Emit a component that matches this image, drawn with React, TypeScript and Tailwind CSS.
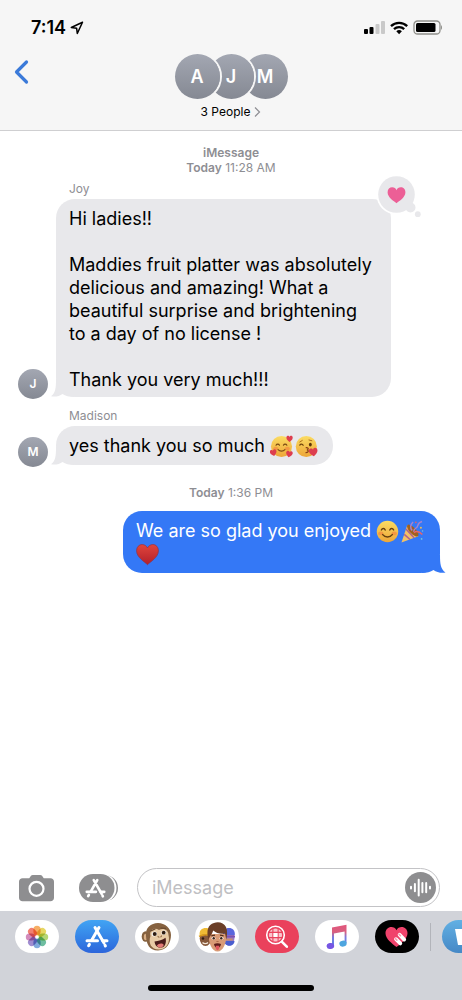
import type { ReactNode } from 'react'

const font = "font-['Inter','Liberation_Sans',sans-serif]"

function StatusIcons() {
  return (
    <svg width="78" height="16" viewBox="0 0 78 16" role="img" aria-label="Signal, Wi-Fi and battery">
      <rect x="0" y="9" width="4" height="5" rx="1" fill="#000" />
      <rect x="5.5" y="7" width="4" height="7" rx="1" fill="#000" />
      <rect x="11.5" y="4" width="4" height="10" rx="1" fill="#c9c9c9" />
      <rect x="17" y="1" width="4" height="13" rx="1" fill="#c9c9c9" />
      <g fill="none" stroke="#000" strokeWidth="2.3">
        <path d="M27 6.1a11.6 11.6 0 0 1 16.2 0" />
        <path d="M30 9.1a7.4 7.4 0 0 1 10.2 0" />
      </g>
      <path d="M32.3 11.3a4.2 4.2 0 0 1 5.6 0L35.1 14.2z" fill="#000" />
      <rect x="50" y="1" width="26" height="13" rx="3.6" fill="none" stroke="#8f8f8a" strokeWidth="1.3" />
      <rect x="52" y="3" width="19.5" height="9" rx="1.5" fill="#000" />
      <path d="M77 5.2c1.3.5 1.3 4 0 4.5z" fill="#8f8f8a" />
    </svg>
  )
}

function Emoji({ label, children }: { label: string; children: ReactNode }) {
  return (
    <svg
      width="23"
      height="23"
      viewBox="0 0 24 24"
      role="img"
      aria-label={label}
      className="-mt-1 -mb-0.5 mr-0.5 inline-block align-middle"
    >
      {children}
    </svg>
  )
}

const heartPath =
  'M0 3.2C-1 2.3-3.3.9-3.3-1.2-3.3-2.5-2.5-3.2-1.6-3.2-.8-3.2-.2-2.7 0-2 .2-2.7.8-3.2 1.6-3.2 2.5-3.2 3.3-2.5 3.3-1.2 3.3.9 1 2.3 0 3.2z'

function LovingFace() {
  return (
    <Emoji label="smiling face with hearts">
      <circle cx="12" cy="12" r="11" fill="url(#face)" />
      <ellipse cx="6" cy="14" rx="2.6" ry="1.8" fill="#f47a3c" opacity=".5" />
      <ellipse cx="18" cy="14" rx="2.6" ry="1.8" fill="#f47a3c" opacity=".5" />
      <g fill="none" stroke="#7a4a12" strokeWidth="1.2" strokeLinecap="round">
        <path d="M6.3 10.7c.8-1.5 2.8-1.5 3.6 0M14 10.7c.8-1.5 2.8-1.5 3.6 0" />
        <path d="M8.4 15.3c1.9 2 5.3 2 7.2 0" />
      </g>
      <g fill="#dd3e4e">
        <path d={heartPath} transform="translate(20.4 4)" />
        <path d={heartPath} transform="translate(3.6 18.6) rotate(-14) scale(1.05)" />
        <path d={heartPath} transform="translate(20 20) rotate(12) scale(1.05)" />
      </g>
    </Emoji>
  )
}

function KissFace() {
  return (
    <Emoji label="face blowing a kiss">
      <circle cx="11.8" cy="12" r="11" fill="url(#face)" />
      <path d="M5 10.6c.8-1.4 2.8-1.4 3.5.1" fill="none" stroke="#70430e" strokeWidth="1.3" strokeLinecap="round" />
      <ellipse cx="16" cy="10" rx="1.5" ry="2" fill="#5b350a" />
      <path d="M5 7.3l2.6-1.6M14.6 5.2l3 .8" stroke="#a76a1a" strokeWidth="1" strokeLinecap="round" />
      <path d="M11.7 13.2c2.8-.2 2.6 2.2.7 2.4 2 .2 2 2.6-.9 2.8" fill="none" stroke="#8a3f16" strokeWidth="1.3" strokeLinecap="round" />
      <path d={heartPath} transform="translate(19.2 18) rotate(-8) scale(1.35)" fill="#dd3e4e" />
    </Emoji>
  )
}

function BlushFace() {
  return (
    <Emoji label="smiling face with smiling eyes">
      <circle cx="12" cy="12" r="11.2" fill="url(#face)" />
      <ellipse cx="5" cy="14" rx="2.8" ry="2" fill="#f47a3c" opacity=".55" />
      <ellipse cx="19" cy="14" rx="2.8" ry="2" fill="#f47a3c" opacity=".55" />
      <g fill="none" stroke="#67400f" strokeWidth="1.5" strokeLinecap="round">
        <path d="M5.6 10.4c.9-2 3.2-2 4 0M14.4 10.4c.8-2 3.1-2 4 0" />
        <path d="M7 15.2c2.5 3.3 7.5 3.3 10 0" />
      </g>
    </Emoji>
  )
}

function PartyPopper() {
  return (
    <Emoji label="party popper">
      <path d="M.5 23.6L6.5 5.4c4.500 1.900 9.500 7 11.500 11.600z" fill="#f3c266" />
      <path d="M3.400 15l6.100 5.300M5.200 9.500l8.600 9.300" stroke="#b0628f" strokeWidth="1.600" />
      <ellipse cx="12.300" cy="11" rx="8" ry="3.200" transform="rotate(46 12.300 11)" fill="#a0601f" />
      <path d="M11.600 11c-2.600-3.400-1.600-6.400 1-9M13.200 12.200c.2-4 3.600-3 4.300-6.400.4-2 1.800-3.600 4.500-4.300" fill="none" stroke="#a583cf" strokeWidth="1.500" />
      <path d="M13.600 13.200c3.400-2.600 6.200-.5 8.700 2" fill="none" stroke="#e8656a" strokeWidth="1.500" />
      <circle cx="15.500" cy="2.400" r=".9" fill="#ef5b62" />
      <circle cx="20.800" cy="8" r="1" fill="#f4c04e" />
      <circle cx="22.500" cy="11.400" r=".8" fill="#73c7d8" />
      <circle cx="21.500" cy="19.800" r=".9" fill="#73c7d8" />
    </Emoji>
  )
}

function RedHeart() {
  return (
    <Emoji label="red heart">
      <path
        d="M12 22.600C9.200 19.800.6 15 .6 8.200.6 4.300 3.100 1.600 6.500 1.600c2.400 0 4.500 1.400 5.500 3.600 1-2.200 3.100-3.600 5.500-3.600 3.400 0 5.900 2.700 5.900 6.600 0 6.800-8.600 11.600-11.400 14.400z"
        fill="url(#redheart)"
        stroke="#93303f"
        strokeWidth=".7"
      />
    </Emoji>
  )
}

function Tail({ side }: { side: 'left' | 'right' }) {
  if (side === 'left') {
    return (
      <svg className="absolute -left-1.5 bottom-0 text-[#e8e8eb]" width="24" height="18" viewBox="0 0 24 18" aria-hidden="true">
        <path d="M6 0C6 9 5.500 14 1 17.200 5 18.200 9.500 17.300 12.500 15 15.500 17 19 18 24 18V0z" fill="currentColor" />
      </svg>
    )
  }
  return (
    <svg className="absolute -right-1.5 bottom-0 text-[#3478f6]" width="24" height="18" viewBox="0 0 24 18" aria-hidden="true">
      <path d="M18 0C18 9 18.500 14 23.500 17.600 19 18.300 14.500 17.300 11.500 15 8.500 17 5 18 0 18V0z" fill="currentColor" />
    </svg>
  )
}

function Stamp({ lead, time }: { lead: string; time: string }) {
  return (
    <p className="text-center text-xs leading-[15px] text-[#8e8e93]">
      <span className="font-semibold">{lead}</span> {time}
    </p>
  )
}

function Incoming({ name, initial, children }: { name: string; initial: string; children: ReactNode }) {
  return (
    <article>
      <h2 className="ml-[69px] mb-0.5 text-xs leading-4 text-[#8e8e93]">{name}</h2>
      <div className="flex items-end gap-2 pl-[18px] pr-4">
        <div className="flex size-[30px] shrink-0 items-center justify-center rounded-full bg-linear-to-b from-[#a3a7b2] to-[#858993] text-xs font-semibold text-white">
          {initial}
        </div>
        <div className="relative mb-0.5 max-w-[335px] rounded-[19px] bg-[#e8e8eb] text-lg leading-[23px] text-black">
          <Tail side="left" />
          {children}
        </div>
      </div>
    </article>
  )
}

function AppStoreMark({ size }: { size: number }) {
  return (
    <svg width={size} height={size} viewBox="0 0 24 24" fill="none" stroke="#fff" strokeWidth="3" strokeLinecap="round" aria-hidden="true">
      <path d="M14 2.500L6.500 15.500M10 2.500L19 18M20 20.200l.4.800M4.400 19.400l-.8 1.400" />
      <path d="M2 15.800h10.500M17.800 15.800H22" />
    </svg>
  )
}

function PhotosIcon() {
  const petals = ['#f5a04a', '#e3d046', '#a8cf5c', '#55b391', '#6a9bd6', '#8f79c8', '#cc76b0', '#ef6a58']
  return (
    <svg width="24" height="24" viewBox="0 0 24 24" className="isolate" aria-hidden="true">
      {petals.map((c, i) => (
        <rect
          key={c}
          x="8.400"
          y="0.800"
          width="7.200"
          height="9.600"
          rx="3.600"
          fill={c}
          opacity=".85"
          transform={`rotate(${i * 45} 12 12)`}
          className="mix-blend-multiply"
        />
      ))}
      <circle cx="12" cy="12" r="1.300" fill="#fff" />
    </svg>
  )
}

function MonkeyIcon() {
  return (
    <svg width="32" height="30" viewBox="0 0 32 30" aria-hidden="true">
      <ellipse cx="4.500" cy="14.500" rx="3.800" ry="5.200" fill="#84603d" />
      <ellipse cx="4.800" cy="15" rx="2" ry="3.300" fill="#d9ae84" />
      <path d="M5 14C4 6 10 1 17 1s13 5 13 12-4 15.500-13 15.500S5.500 22 5 14z" fill="#866240" />
      <path d="M9.500 14c-1.500-6.500 4-9 8.500-6 4-2.500 9.500-.5 9.500 5 2 7-2 14.500-9.500 14.500-8 0-11-6.500-8.500-13.500z" fill="#e8cba5" />
      <ellipse cx="13.400" cy="12" rx="2.700" ry="2.300" fill="#fff" transform="rotate(-15 13.400 12)" />
      <ellipse cx="22.800" cy="10.700" rx="2.500" ry="2.200" fill="#fff" transform="rotate(-15 22.800 10.700)" />
      <circle cx="13.700" cy="12" r="2" fill="#2e1c10" />
      <circle cx="22.700" cy="10.700" r="1.900" fill="#2e1c10" />
      <path d="M9.800 9l4.200-2M20 6.200l4.500.2" stroke="#6b4a2f" strokeWidth="1.200" strokeLinecap="round" />
      <path d="M17 14.500l1 .7M20.500 14l-.7.800" stroke="#9a7350" strokeWidth="1.200" strokeLinecap="round" />
      <path d="M13.500 19.500c4-.2 8-1.500 11-3.700 1.300 5-.5 10-5 10-3.400 0-5.500-2.500-6-6.300z" fill="#4a1c1a" />
      <path d="M15.800 23.800c1.800-2.600 5.500-3 7-.9-1.400 3.400-4.900 3.800-7 .9z" fill="#e27a76" />
    </svg>
  )
}

function MemojiIcon() {
  return (
    <svg width="40" height="32" viewBox="0 0 40 32" aria-hidden="true">
      <ellipse cx="8.500" cy="17.500" rx="5.800" ry="7.500" fill="#85583a" />
      <path d="M2.700 14.500C2 9 5 7 8.700 7S15 9.500 14.500 14.500c-4-1.500-8-1.500-11.800 0z" fill="#efbb35" />
      <path d="M2 15.300c4-2 9-2 13 0" stroke="#d99a1b" strokeWidth="1.500" fill="none" />
      <circle cx="6" cy="17.500" r="1.200" fill="#2d1b10" />
      <path d="M5.500 21.500c1.500 1.600 4 1.600 5.500 0" stroke="#f3e6d8" strokeWidth="1.300" fill="none" />
      <ellipse cx="32" cy="17" rx="5.500" ry="7.500" fill="#9a7ac2" />
      <path d="M26 14c-.5-5 2.500-7 6-7s6.200 2.500 5.800 7z" fill="#5a67dd" />
      <path d="M27 14.500h11v2H27z" fill="#7d52b0" />
      <path d="M29 17.500h6.500v2H29z" fill="#c9906e" />
      <path d="M27 20h10.500c0 3-2.500 4.800-5 4.800S27 23 27 20z" fill="#4a5ecf" />
      <path d="M11.500 13c0 9.500 3.500 17.500 9 17.500S29.500 22.500 29.500 13z" fill="#d99b76" />
      <path d="M11.500 18.500C9 10 11 3.200 17 2c4-1.800 10-.5 12 4 1.700 3.800 1.200 8.500.3 12.500L28 12.500c-4.500 1-9-.5-11.800-3-1 3.800-3.200 5-4.700 9z" fill="#6b3f27" />
      <path d="M14.300 14.800l3.700-.7M23 14.100l3.600.7" stroke="#54301d" strokeWidth="1.300" />
      <ellipse cx="16.500" cy="17.200" rx="1.900" ry="1.400" fill="#fff" />
      <ellipse cx="24.500" cy="17.200" rx="1.900" ry="1.400" fill="#fff" />
      <circle cx="16.700" cy="17.200" r="1.200" fill="#3a2419" />
      <circle cx="24.300" cy="17.200" r="1.200" fill="#3a2419" />
      <path d="M19.400 20.500h2.200" stroke="#ad6a4b" strokeWidth="1.200" />
      <path d="M17 23c2.200-.9 4.800-.9 7 0-.2 2.200-1.600 4-3.500 4s-3.300-1.800-3.500-4z" fill="#5d1d1b" />
      <path d="M18.800 24.800h3.400c.2 2.600-.4 4.400-1.700 4.400s-1.900-1.800-1.700-4.400z" fill="#e0575f" />
    </svg>
  )
}

function ImagesIcon() {
  return (
    <svg width="24" height="24" viewBox="0 0 24 24" fill="none" stroke="#fff" aria-hidden="true">
      <circle cx="10.500" cy="10" r="8.800" strokeWidth="1.600" />
      <path d="M17 16.800l4.800 4.900" strokeWidth="2.600" strokeLinecap="round" />
      <circle cx="10.500" cy="10" r="6.600" stroke="none" fill="#fac3cb" />
      <path d="M3.500 7.400h14M3.500 12.600h14M7.900 3v14M13.100 3v14" stroke="#ea415c" strokeWidth="1.100" />
      <path d="M8.500 8h4v4h-4z" fill="#fff" stroke="none" />
    </svg>
  )
}

function MusicIcon() {
  return (
    <svg width="22" height="26" viewBox="0 0 22 26" aria-hidden="true">
      <path d="M6 3.400L20.500.8v18.300h-1.900V7.500L8 9.400v12.400H6z" fill="url(#music)" />
      <ellipse cx="4.400" cy="22" rx="3.800" ry="3" fill="#7656e3" transform="rotate(-12 4.400 22)" />
      <ellipse cx="17" cy="19.600" rx="3.700" ry="3" fill="#4ea5df" transform="rotate(-12 17 19.600)" />
    </svg>
  )
}

function DigitalTouchIcon() {
  return (
    <svg width="26" height="24" viewBox="0 0 26 24" aria-hidden="true">
      <path
        d="M12.500 22C8 18.500 1.500 13.800 1.500 8.200 1.500 4.500 4.200 2 7.300 2c2.300 0 4.200 1.200 5.200 3.200 1-2 2.900-3.200 5.200-3.200 3.100 0 5.800 2.500 5.800 6.200 0 5.600-6.500 10.300-11 13.800z"
        fill="#f0436c"
      />
      <path d="M12 14.200l4.300 4.200M15.600 9.800l4.600 4.800" stroke="#fff" strokeWidth="3.800" strokeLinecap="round" />
      <path d="M11.400 13.600l1.500 1.500M15 9.200l1.500 1.500" stroke="#f79ab0" strokeWidth="1.500" strokeLinecap="round" />
    </svg>
  )
}

const pill = 'flex h-[33px] w-11 shrink-0 items-center justify-center overflow-hidden rounded-full'

function Header() {
  const ringed = 'relative ring-2 ring-[#f6f6f6]'
  const avatar =
    'flex size-[45px] items-center justify-center rounded-full bg-linear-to-b from-[#a3a7b2] to-[#858993] text-lg font-semibold text-white'

  return (
    <header className="border-b border-[#cfcfd1] bg-[#f6f6f6] pt-4 pb-2.5">
      <div className="flex h-6 items-center justify-between pl-[31px] pr-5">
        <div className="flex items-center gap-1">
          <time className="text-lg leading-6 font-semibold">7:14</time>
          <svg width="14" height="14" viewBox="0 0 14 14" fill="none" stroke="#000" strokeWidth="1.500" strokeLinejoin="round" aria-hidden="true">
            <path d="M12.500 1.300L1.300 6.500l5.300.7.700 5.300z" />
          </svg>
        </div>
        <StatusIcons />
      </div>

      <div className="grid grid-cols-[1fr_auto_1fr] pt-3.5">
        <button type="button" aria-label="Back" className="ml-3.5 h-9 w-8 self-start">
          <svg width="15" height="26" viewBox="0 0 15 26" fill="none" stroke="#3b7ad9" strokeWidth="3.200" strokeLinecap="round" strokeLinejoin="round" aria-hidden="true">
            <path d="M12.500 3L2.500 13l10 10" />
          </svg>
        </button>
        <button type="button" className="flex flex-col items-center gap-[5px]">
          <span className="flex">
            <span className={`${avatar} ${ringed} z-20`}>A</span>
            <span className={`${avatar} ${ringed} z-10 -ml-[11px]`}>J</span>
            <span className={`${avatar} -ml-[11px]`}>M</span>
          </span>
          <span className="flex items-center gap-1 text-xs leading-4">
            3 People
            <svg width="7" height="12" viewBox="0 0 7 12" fill="none" stroke="#8e8e93" strokeWidth="1.200" aria-hidden="true">
              <path d="M1 1.500L5.500 6 1 10.500" />
            </svg>
          </span>
        </button>
      </div>
    </header>
  )
}

function Composer() {
  return (
    <form className="flex items-center bg-white pt-2 pb-1 pl-[18px] pr-[22px]" onSubmit={(e) => e.preventDefault()}>
      <button type="button" aria-label="Camera" className="shrink-0">
        <svg width="37" height="28" viewBox="0 0 37 28" aria-hidden="true">
          <path
            d="M4.500 4.300h6.200c1.500 0 1.500-3.300 4-3.300h7.600c2.500 0 2.500 3.300 4 3.300h6.200c2 0 3.500 1.500 3.500 3.500v16c0 2-1.500 3.400-3.500 3.400h-28C2.500 27.200 1 25.800 1 23.800v-16c0-2 1.500-3.500 3.500-3.500z"
            fill="#8e8e90"
          />
          <circle cx="18.500" cy="14.800" r="7" fill="none" stroke="#fff" strokeWidth="2.200" />
        </svg>
      </button>
      <button type="button" aria-label="Apps" className="relative ml-6 h-7 w-[39px] shrink-0">
        <svg width="39" height="28" viewBox="0 0 39 28" aria-hidden="true">
          <rect x="8" y="1" width="31" height="26" rx="13" fill="#8e8e90" />
          <rect x="2" y="-.5" width="35.500" height="29" rx="14.500" fill="#fff" />
          <rect x="0" y="0" width="35.500" height="28" rx="14" fill="#8e8e90" />
        </svg>
        <span className="absolute top-1 left-1.5">
          <AppStoreMark size={21} />
        </span>
      </button>
      <div className="ml-[19px] flex h-[39px] min-w-0 flex-1 items-center rounded-full border border-[#c3c3c6] pl-3.5 pr-[3px]">
        <input
          type="text"
          aria-label="Message"
          placeholder="iMessage"
          className="min-w-0 flex-1 bg-transparent text-lg leading-6 outline-none placeholder:text-[#bfbfc3]"
        />
        <button type="button" aria-label="Record audio" className="shrink-0">
          <svg width="31" height="31" viewBox="0 0 31 31" aria-hidden="true">
            <circle cx="15.500" cy="15.500" r="15.500" fill="#8e8e90" />
            <path
              d="M6 14.800v1.600M9.900 12v7.200M13.700 7.800v15.600M17.400 11v9.200M21.200 11v9.200M25 14.800v1.600"
              stroke="#fff"
              strokeWidth="2"
              strokeLinecap="round"
            />
          </svg>
        </button>
      </div>
    </form>
  )
}

function AppStrip() {
  return (
    <nav aria-label="iMessage apps" className="overflow-hidden bg-[#d1d3d9] pt-[9px] pb-[9px]">
      <div className="flex items-center gap-4 pl-[15px]">
        <button type="button" aria-label="Photos" className={`${pill} bg-white`}>
          <PhotosIcon />
        </button>
        <button type="button" aria-label="App Store" className={`${pill} bg-linear-to-b from-[#42a4f3] to-[#2d65db]`}>
          <AppStoreMark size={24} />
        </button>
        <button type="button" aria-label="Animoji" className={`${pill} bg-white`}>
          <MonkeyIcon />
        </button>
        <button type="button" aria-label="Memoji" className={`${pill} bg-white`}>
          <MemojiIcon />
        </button>
        <button type="button" aria-label="Images" className={`${pill} bg-[#ea415c]`}>
          <ImagesIcon />
        </button>
        <button type="button" aria-label="Music" className={`${pill} bg-white`}>
          <MusicIcon />
        </button>
        <button type="button" aria-label="Digital Touch" className={`${pill} bg-black`}>
          <DigitalTouchIcon />
        </button>
        <span className="-mx-[5px] h-7 w-px shrink-0 bg-[#b2b4ba]" />
        <button type="button" aria-label="More" className={`${pill} bg-linear-to-b from-[#62b0e3] to-[#4588c6]`}>
          <svg width="18" height="20" viewBox="0 0 18 20" aria-hidden="true">
            <path d="M0 2h18l-3 16H3z" fill="#fff" />
          </svg>
        </button>
      </div>
      <div className="mx-auto mt-8 h-1.5 w-9/25 rounded-full bg-black" />
    </nav>
  )
}

export default function App() {
  return (
    <div className={`flex min-h-screen flex-col bg-white text-black ${font}`}>
      {/* shared gradients */}
      <svg className="absolute size-0" aria-hidden="true">
        <defs>
          <linearGradient id="face" x1="0" y1="0" x2="0" y2="1">
            <stop offset="0" stopColor="#fbdc62" />
            <stop offset="1" stopColor="#eda638" />
          </linearGradient>
          <linearGradient id="redheart" x1="0" y1="0" x2="0" y2="1">
            <stop offset="0" stopColor="#e0453c" />
            <stop offset="1" stopColor="#b3202a" />
          </linearGradient>
          <linearGradient id="music" x1="0" y1="0" x2="0" y2="1">
            <stop offset="0" stopColor="#e2557c" />
            <stop offset=".35" stopColor="#d8607f" />
            <stop offset=".6" stopColor="#7a7be0" />
            <stop offset="1" stopColor="#5a86e4" />
          </linearGradient>
        </defs>
      </svg>

      <Header />

      <main className="flex-1 pt-3.5">
        <p className="text-center text-xs leading-[15px] font-semibold text-[#8e8e93]">iMessage</p>
        <Stamp lead="Today" time="11:28 AM" />

        <div className="mt-1.5">
          <Incoming name="Joy" initial="J">
            <p className="relative px-[13px] pt-2 pb-1.5 whitespace-pre-line">
              {'Hi ladies!!\n\nMaddies fruit platter was absolutely delicious and amazing! What a beautiful surprise and brightening to a day of no license !\n\nThank you very much!!!'}
            </p>
            {/* tapback */}
            <div className="absolute -top-6 -right-[30px]">
              <svg width="44" height="44" viewBox="0 0 44 44" role="img" aria-label="Loved">
                <circle cx="19.500" cy="19.500" r="20" fill="#fff" />
                <circle cx="19.500" cy="19.500" r="18.300" fill="#e8e8eb" />
                <circle cx="33.500" cy="32.500" r="5" fill="#e8e8eb" />
                <circle cx="40.800" cy="39.200" r="2.900" fill="#e8e8eb" />
                <path d={heartPath} transform="translate(19.500 20.300) scale(2.700 2.500)" fill="#ec5f96" />
              </svg>
            </div>
          </Incoming>
        </div>

        <div className="mt-[9px]">
          <Incoming name="Madison" initial="M">
            <p className="relative px-[13px] py-2">
              yes thank you so much <LovingFace />
              <KissFace />
            </p>
          </Incoming>
        </div>

        <div className="mt-[18px]">
          <Stamp lead="Today" time="1:36 PM" />
        </div>

        <div className="mt-[11px] flex justify-end pr-[22px] pl-4">
          <div className="relative max-w-[317px] rounded-[19px] bg-[#3478f6] text-lg leading-[23px] text-white">
            <Tail side="right" />
            <p className="relative px-[13px] py-2">
              We are so glad you enjoyed <BlushFace />
              <PartyPopper /> <RedHeart />
            </p>
          </div>
        </div>
      </main>

      <Composer />
      <AppStrip />
    </div>
  )
}
